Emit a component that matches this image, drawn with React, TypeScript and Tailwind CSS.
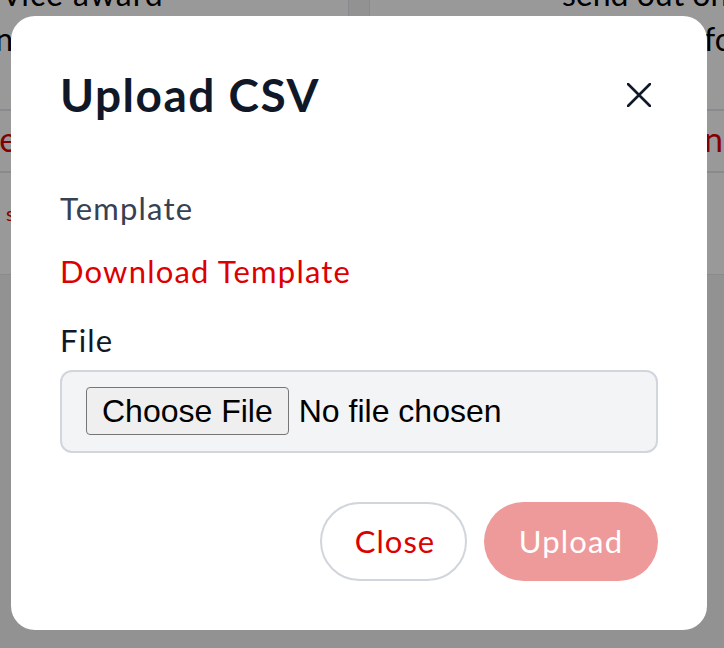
import { useState } from "react";

function CloseIcon() {
  return (
    <svg width="24" height="24" viewBox="0 0 24 24" fill="none" className="mr-[7px]">
      <path d="M1 1L23 23M23 1L1 23" stroke="#111827" strokeWidth="2.6" strokeLinecap="round" />
    </svg>
  );
}

function BackgroundPage() {
  return (
    <div className="h-[648px] overflow-hidden bg-gray-100 font-['Lato',sans-serif]">
      <div className="-mt-[38px] -ml-[260px] flex gap-[20px]">
        {/* left card */}
        <div className="w-[609px] shrink-0 border border-gray-200 bg-white">
          <div className="h-[148px] border-b-2 border-gray-200 px-[24px] pt-[8px] text-[32px] leading-[45px] text-black">
            <span className="block pl-[190px] tracking-[1px]">Service award</span>
            <span className="block pl-[212px]">on</span>
          </div>
          <div className="h-[62px] border-b-2 border-gray-200 px-[24px] pt-[8px] text-[34px] leading-[40px] text-[#dd0000]">
            <span className="pl-[143px]">Update</span>
          </div>
          <div className="h-[101px] px-[24px] pt-[26px] text-[20px] leading-[28px] text-[#dd0000]">
            <span className="pl-[241px]">send preview</span>
          </div>
        </div>
        {/* right card */}
        <div className="w-[600px] shrink-0 border border-gray-200 bg-white">
          <div className="h-[148px] border-b-2 border-gray-200 px-[24px] pt-[8px] text-[32px] leading-[45px] text-black">
            <span className="block whitespace-nowrap pl-[168px]">send out on</span>
            <span className="block pl-[310px]">for</span>
          </div>
          <div className="h-[62px] border-b-2 border-gray-200 px-[24px] pt-[8px] text-[34px] leading-[40px] text-[#dd0000]">
            <span className="pl-[310px]">none</span>
          </div>
          <div className="h-[101px]" />
        </div>
      </div>
    </div>
  );
}

export default function App() {
  const [fileName] = useState("");

  return (
    <div className="relative h-[648px] w-full overflow-hidden">
      <BackgroundPage />

      {/* Overlay */}
      <div className="absolute inset-0 bg-black/40 pl-[11px] pt-[16px]">
        <div className="flex h-[614px] w-[696px] flex-col rounded-[24px] bg-white px-[49px] pb-[49px] pt-[56px] font-['Lato',sans-serif]">
          <div className="flex h-[46px] items-center justify-between">
            <h2 className="text-[46px] font-bold leading-none tracking-[1.5px] text-gray-900">Upload CSV</h2>
            <button type="button" aria-label="Close">
              <CloseIcon />
            </button>
          </div>

          <p className="mt-[70px] text-[31px] leading-[40px] tracking-[1.2px] text-gray-700">Template</p>
          <a href="#" className="mt-[23px] text-[31px] leading-[40px] tracking-[1.2px] text-[#dd0000]">
            Download Template
          </a>

          <label className="mt-[29px] text-[31px] leading-[40px] tracking-[1.2px] text-gray-900">File</label>
          <input
            type="file"
            accept=".csv"
            defaultValue={fileName}
            className="mt-[10px] h-[83px] w-full rounded-[12px] border-2 border-gray-300 bg-gray-100 px-[24px] py-[15px] font-['Liberation_Sans',Arial,sans-serif] text-[32px] text-black file:mr-[10px] file:rounded-[4px] file:border file:border-[#767676] file:bg-[#efefef] file:px-[15px] file:py-[5px] file:font-['Liberation_Sans',Arial,sans-serif] file:text-[32px] file:leading-[36px] file:text-black"
          />

          <div className="mt-[49px] flex justify-end gap-[17px]">
            <button
              type="button"
              className="flex h-[79px] w-[147px] items-center justify-center rounded-full border-2 border-gray-300 bg-white pl-[3px] text-[31px] tracking-[1px] text-[#dd0000]"
            >
              Close
            </button>
            <button
              type="button"
              disabled
              className="flex h-[79px] w-[174px] items-center justify-center rounded-full bg-[#ef9a9a] text-[31px] tracking-[1.2px] text-white"
            >
              Upload
            </button>
          </div>
        </div>
      </div>
    </div>
  );
}
